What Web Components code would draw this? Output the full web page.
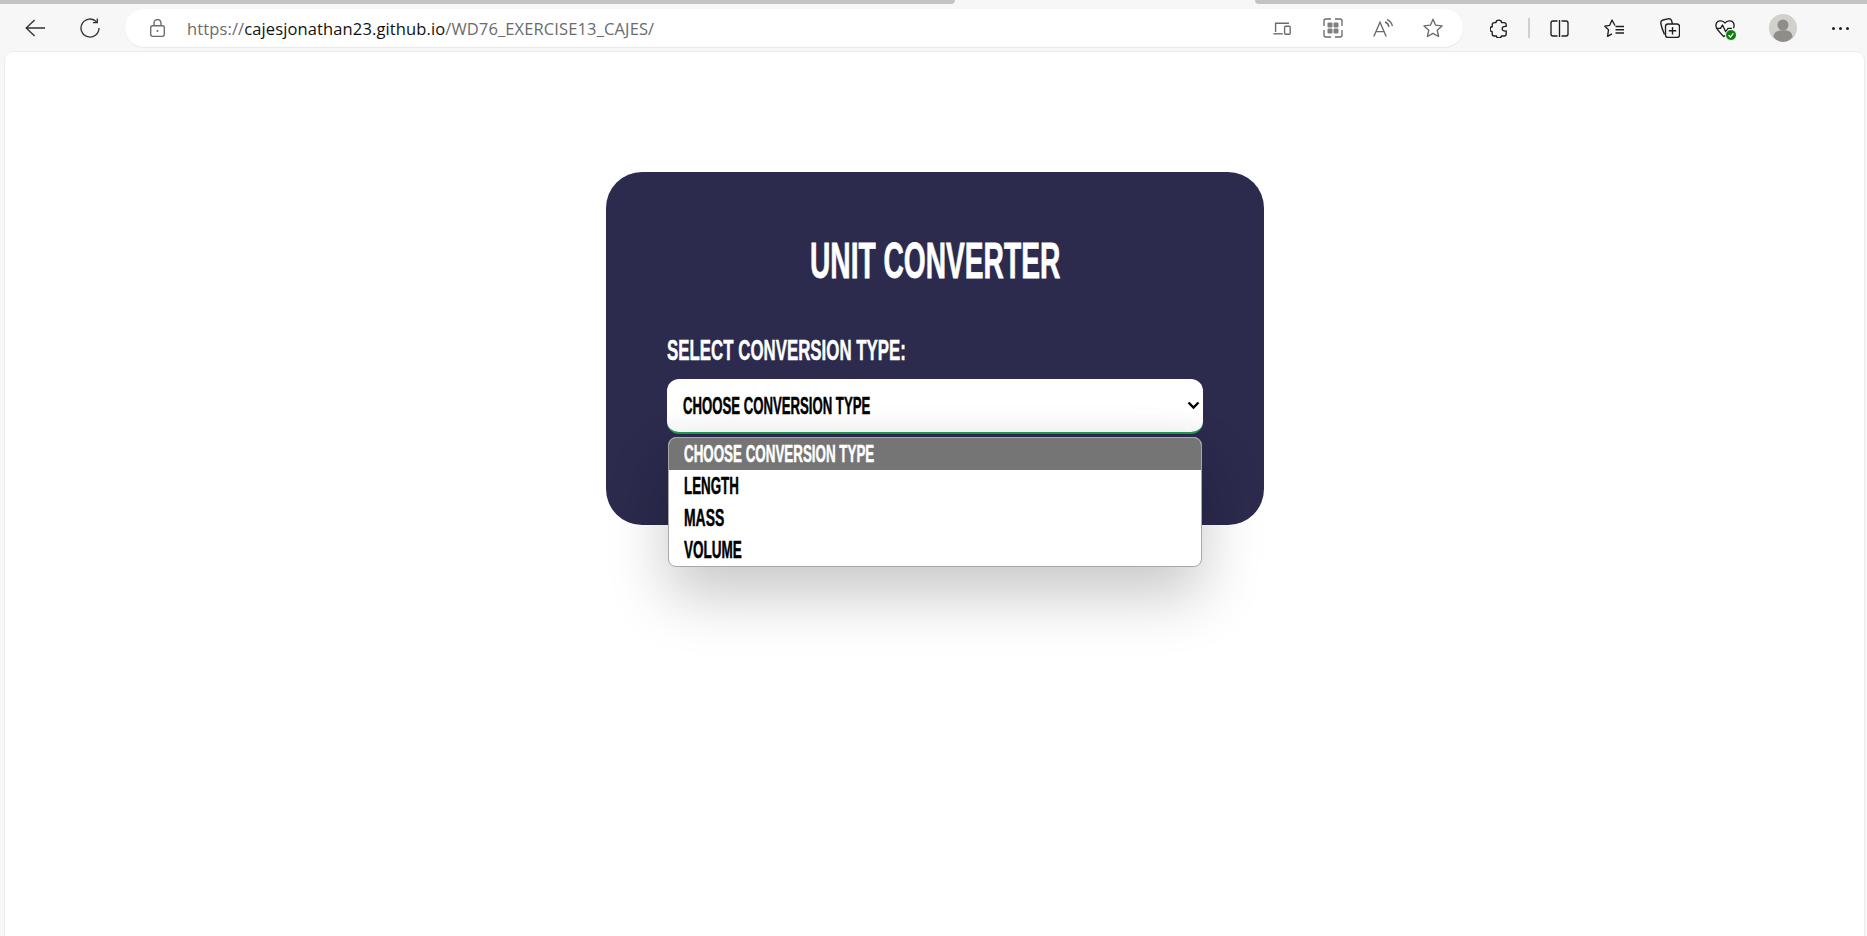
<!DOCTYPE html>
<html>
<head>
<meta charset="utf-8">
<title>Unit Converter</title>
<style>
  html, body { margin: 0; height: 100%; background: #f7f7f7; overflow: hidden; }
  body { display: flex; flex-direction: column; }
</style>
</head>
<body>
<browser-chrome></browser-chrome>
<page-panel>
  <converter-card></converter-card>
</page-panel>

<script>
class FitText extends HTMLElement {
  constructor() {
    super();
    this.attachShadow({ mode: 'open' });
    this.shadowRoot.innerHTML = `
      <style>
        :host { display: block; white-space: nowrap; -webkit-text-stroke: var(--fit-stroke, .5px) currentColor; }
        span { display: inline-block; transform-origin: left center; }
      </style>
      <span><slot></slot></span>`;
  }
  connectedCallback() {
    let target = Number(this.getAttribute('width'));
    let span = this.shadowRoot.querySelector('span');
    this.style.width = target + 'px';
    span.style.transform = `scaleX(${target / span.offsetWidth})`;
  }
}
customElements.define('fit-text', FitText);

const ICONS = {
  back: `<svg width="20" height="18" viewBox="0 0 20 18"><path d="M20 9H1.2M9.6 1 1.2 9l8.4 8"/></svg>`,
  reload: `<svg width="20" height="20" viewBox="0 0 20 20"><path d="M16.6 3.9A9 9 0 1 0 19 10"/><path d="M17.3 .4v4.2h-4.4"/></svg>`,
  lock: `<svg width="15" height="18" viewBox="0 0 15 18"><rect x=".7" y="6.7" width="13.6" height="10.6" rx="2"/><path d="M4 6.7V4a3.5 3.5 0 0 1 7 0v2.7"/><circle cx="7.5" cy="12" r="1" fill="currentColor" stroke="none"/></svg>`,
  device: `<svg width="18" height="13" viewBox="0 0 18 13"><path d="M2.6 10V1.2H16"/><path d="M.4 11.8h9.4"/><rect x="11.6" y="4.2" width="5.6" height="8" rx="1"/></svg>`,
  apps: `<svg width="20" height="20" viewBox="0 0 20 20"><path d="M1 8V3a2 2 0 0 1 2-2h5M12 1h5a2 2 0 0 1 2 2v5M19 12v5a2 2 0 0 1-2 2h-5M8 19H3a2 2 0 0 1-2-2v-5"/><g fill="currentColor" fill-opacity=".85" stroke="none"><rect x="4.5" y="4.5" width="5" height="5" rx="1"/><rect x="10.5" y="4.5" width="5" height="5" rx="1"/><rect x="4.5" y="10.5" width="5" height="5" rx="1"/><rect x="10.5" y="10.5" width="5" height="5" rx="1"/></g></svg>`,
  aloud: `<svg width="20" height="18" viewBox="0 0 20 18"><path d="M.8 17.6 7 3.2l6.2 14.4M2.8 12.6h8.4"/><path d="M12 3c2.2.8 3.6 2.6 4 5M14 .6c2.8 1 4.8 3.4 5.4 6.6"/></svg>`,
  star: `<svg width="20" height="20" viewBox="0 0 20 20"><path stroke-linejoin="round" d="M10 1.3l2.6 5.9 6.4.7-4.8 4.3 1.4 6.3-5.6-3.2-5.6 3.2 1.4-6.3L1 7.9l6.4-.7z"/></svg>`,
  puzzle: `<svg width="18" height="19" viewBox="0 0 18 19"><path stroke-linejoin="round" d="M6 3.6C6 .2 11.6 .2 11.6 3.6H14.2a2 2 0 0 1 2 2V7.4C13.4 7 12.2 8.2 12.2 9.7S13.4 12.4 16.2 12V15a2 2 0 0 1-2 2H11.4C11.4 19.4 6.4 19.4 6.4 17H4.2a2 2 0 0 1-2-2V12.6C-.5 12.6-.5 7.8 2.2 7.8V5.6a2 2 0 0 1 2-2Z"/></svg>`,
  split: `<svg width="19" height="17" viewBox="0 0 19 17"><path d="M7.5 1H3a2 2 0 0 0-2 2v11a2 2 0 0 0 2 2h4.5M11.5 1H16a2 2 0 0 1 2 2v11a2 2 0 0 1-2 2h-4.5M9.5 0v17"/></svg>`,
  favs: `<svg width="20" height="19" viewBox="0 0 20 19"><path stroke-linejoin="round" d="M11 6.5 8 1 5.7 6.3.8 7.2l3.700 3.500-.9 6.600L8 14.800"/><path d="M11.5 7.500H20M11.500 10.700H20M11.500 14H20"/></svg>`,
  collections: `<svg width="20" height="20" viewBox="0 0 20 20"><path d="M4.500 16.500C2.500 12 1.500 9 .8 5.500.5 3.500 1.500 2.500 3 2L8 .8C10 .5 11 1 11.500 2.500L12.500 6"/><rect x="5.500" y="6" width="14" height="13.500" rx="2.500"/><path d="M12.500 9v7.400M8.800 12.700h7.400"/></svg>`,
  heart: `<svg width="20" height="19" viewBox="0 0 20 19"><path stroke-linejoin="round" d="M10 4.200C7.800 .6 1 1 .9 6.600c0 3.700 4 7 8 11l1.600-1.400M10 4.200C12.200.6 19 1 19.100 6.600c0 1-.2 1.800-.6 2.600"/><path stroke-linejoin="round" d="M1.200 9.400h4.300L7.500 6l3.200 6.800 2.300-3.400h4"/></svg>`
};

class ToolIcon extends HTMLElement {
  constructor() {
    super();
    this.attachShadow({ mode: 'open' });
    this.shadowRoot.innerHTML = `
      <style>
        :host { display: flex; flex: none; align-items: center; justify-content: center; position: relative; height: 38px; color: var(--icon-color, #1f1f1f); }
        svg { fill: none; stroke: currentColor; stroke-width: 1.35; display: block; }
      </style>
      ${ICONS[this.getAttribute('name')] || ''}<slot></slot>`;
    this.style.width = this.getAttribute('w') + 'px';
  }
}
customElements.define('tool-icon', ToolIcon);

class AddressBar extends HTMLElement {
  constructor() {
    super();
    this.attachShadow({ mode: 'open' });
    this.shadowRoot.innerHTML = `
      <style>
        :host { display: flex; align-items: center; width: 1338px; height: 38px; margin-left: 8px; padding: 0 5px 0 25px; box-sizing: border-box; background: #fff; border-radius: 19px; box-shadow: 0 1px 1px rgba(0,0,0,.06); --icon-color: #6a6a6a; }
        .url { margin-left: 22px; flex: 1; font: 16.5px "Open Sans", sans-serif; letter-spacing: .12px; color: #6b6b6b; white-space: nowrap; }
        .url b { font-weight: 400; color: #111; }
      </style>
      <tool-icon name="lock" w="15"></tool-icon>
      <div class="url">https://<b>cajesjonathan23.github.io</b>/WD76_EXERCISE13_CAJES/</div>
      <tool-icon name="device" w="51"></tool-icon>
      <tool-icon name="apps" w="51"></tool-icon>
      <tool-icon name="aloud" w="50"></tool-icon>
      <tool-icon name="star" w="50"></tool-icon>`;
  }
}
customElements.define('address-bar', AddressBar);

class BrowserChrome extends HTMLElement {
  constructor() {
    super();
    this.attachShadow({ mode: 'open' });
    this.shadowRoot.innerHTML = `
      <style>
        :host { display: block; flex: none; height: 52px; background: #f7f7f7; }
        .tabs { display: flex; height: 4px; }
        .tabs div { background: #c4c4c4; }
        .tabs .a { width: 955px; border-radius: 0 0 6px 0; }
        .tabs .gap { width: 300px; background: none; }
        .tabs .b { flex: 1; border-radius: 0 0 0 6px; }
        .bar { display: flex; align-items: center; height: 38px; margin-top: 5px; padding-left: 7px; }
        .sep { flex: none; width: 2px; height: 20px; margin: 0 2px; background: #d0d0d0; }
        .avatar { width: 28px; height: 28px; border-radius: 50%; background: #d1d0cc; display: block; }
        .dots { display: flex; gap: 4px; }
        .dots i { width: 3px; height: 3px; border-radius: 50%; background: #1f1f1f; }
        .badge { position: absolute; left: 28px; top: 20px; width: 12px; height: 12px; }
      </style>
      <div class="tabs"><div class="a"></div><div class="gap"></div><div class="b"></div></div>
      <div class="bar">
        <tool-icon name="back" w="55" style="--icon-color:#333"></tool-icon>
        <tool-icon name="reload" w="55" style="--icon-color:#333"></tool-icon>
        <address-bar></address-bar>
        <tool-icon name="puzzle" w="55" style="margin-left:8px"></tool-icon>
        <div class="sep"></div>
        <tool-icon name="split" w="54"></tool-icon>
        <tool-icon name="favs" w="56"></tool-icon>
        <tool-icon name="collections" w="55"></tool-icon>
        <tool-icon name="heart" w="55">
          <svg class="badge" viewBox="0 0 12 12"><circle cx="6" cy="6" r="5.500" fill="#107c10" stroke="#f7f7f7" stroke-width="1"/><path d="M3.600 6.200 5.400 8l3-3.600" fill="none" stroke="#fff" stroke-width="1.200"/></svg>
        </tool-icon>
        <tool-icon w="61">
          <svg class="avatar" viewBox="0 0 28 28" style="stroke:none"><circle cx="14" cy="11" r="5.500" fill="#8f8d89"/><path d="M4.500 23c0-5 4-6.800 9.500-6.800s9.500 1.800 9.500 6.800c-2.400 3-6 5-9.500 5s-7.100-2-9.500-5z" fill="#8f8d89"/></svg>
        </tool-icon>
        <tool-icon w="54"><div class="dots"><i></i><i></i><i></i></div></tool-icon>
      </div>`;
  }
}
customElements.define('browser-chrome', BrowserChrome);

class PagePanel extends HTMLElement {
  constructor() {
    super();
    this.attachShadow({ mode: 'open' });
    this.shadowRoot.innerHTML = `
      <style>
        :host { display: flex; flex: 1; justify-content: center; align-items: flex-start; margin: 0 3px 0 5px; padding: 120px 0 0 1px; background: #fff; border-radius: 8px 8px 0 0; box-shadow: 0 0 0 1px #ececec; }
      </style>
      <slot></slot>`;
  }
}
customElements.define('page-panel', PagePanel);

class OptionList extends HTMLElement {
  constructor() {
    super();
    this.attachShadow({ mode: 'open' });
    this.shadowRoot.innerHTML = `
      <style>
        :host { display: block; position: absolute; left: 1px; top: 58px; width: 532px; background: #fff; border: 1px solid #a8a8a8; border-radius: 8px; overflow: hidden; box-shadow: 0 28px 60px rgba(0,0,0,.22); font: 700 24px "Liberation Sans", sans-serif; color: #000; }
        ::slotted(div) { height: 32px; line-height: 32px; padding-left: 15px; }
        ::slotted(.active) { background: #757575; color: #fff; }
      </style>
      <slot></slot>`;
  }
}
customElements.define('option-list', OptionList);

class SelectBox extends HTMLElement {
  constructor() {
    super();
    this.attachShadow({ mode: 'open' });
    this.shadowRoot.innerHTML = `
      <style>
        :host { display: block; position: relative; height: 55px; }
        .field { display: flex; align-items: center; justify-content: space-between; height: 55px; box-sizing: border-box; padding: 0 3px 0 16px; background: linear-gradient(#fff 60%, #f8f8f8); border-bottom: 2px solid #1f9a4e; border-radius: 12px; color: #000; font: 700 24px "Liberation Sans", sans-serif; }
        svg { display: block; }
      </style>
      <div class="field">
        <fit-text width="187">CHOOSE CONVERSION TYPE</fit-text>
        <svg width="13" height="9" viewBox="0 0 13 9"><path d="M1.500 1.500 6.500 6.500l5-5" fill="none" stroke="#000" stroke-width="2.400"/></svg>
      </div>
      <option-list>
        <div class="active"><fit-text width="190">CHOOSE CONVERSION TYPE</fit-text></div>
        <div><fit-text width="55">LENGTH</fit-text></div>
        <div><fit-text width="40">MASS</fit-text></div>
        <div><fit-text width="58">VOLUME</fit-text></div>
      </option-list>`;
  }
}
customElements.define('select-box', SelectBox);

class ConverterCard extends HTMLElement {
  constructor() {
    super();
    this.attachShadow({ mode: 'open' });
    this.shadowRoot.innerHTML = `
      <style>
        :host { display: block; flex: none; width: 658px; height: 353px; box-sizing: border-box; padding: 61px 61px 0; background: #2c2a4d; border-radius: 36px; color: #fff; font-family: "Liberation Sans", sans-serif; }
        h1 { margin: 0; font-size: 50px; line-height: 56px; font-weight: 700; display: flex; justify-content: center; --fit-stroke: .8px; }
        .label { margin-top: 44px; font-size: 29px; line-height: 34px; font-weight: 700; }
        select-box { margin-top: 12px; }
      </style>
      <h1><fit-text width="250">UNIT CONVERTER</fit-text></h1>
      <div class="label"><fit-text width="239">SELECT CONVERSION TYPE:</fit-text></div>
      <select-box></select-box>`;
  }
}
customElements.define('converter-card', ConverterCard);
</script>
</body>
</html>
